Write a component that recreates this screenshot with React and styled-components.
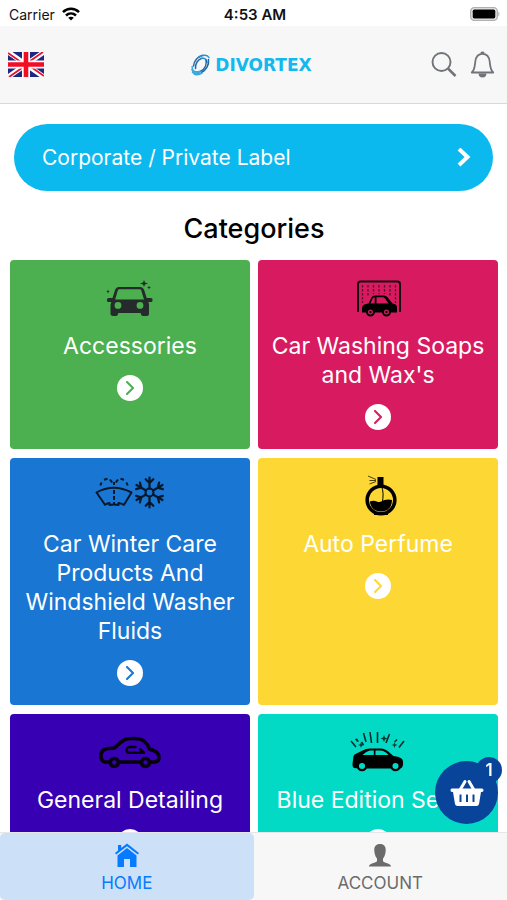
import React from 'react';
import styled, { createGlobalStyle } from 'styled-components';

const GlobalStyle = createGlobalStyle`
  * {
    box-sizing: border-box;
  }

  body {
    margin: 0;
    background: white;
    font-family: Inter, 'Liberation Sans', sans-serif;
  }

  button {
    font-family: inherit;
    border: 0;
    padding: 0;
    background: none;
    cursor: pointer;
  }

  a {
    color: inherit;
    text-decoration: none;
  }

  svg {
    display: block;
  }
`;

const Screen = styled.div`
  display: flex;
  flex-direction: column;
  height: 100vh;
`;

const StatusBar = styled.div`
  display: grid;
  grid-template-columns: 1fr auto 1fr;
  align-items: center;
  flex: none;
  height: 26px;
  padding: 2px 6px 0 9px;
  font-size: 14px;
  color: #111;
`;

const Carrier = styled.span`
  display: flex;
  align-items: center;
  gap: 7px;
`;

const Clock = styled.time`
  font-size: 15px;
  font-weight: 600;
`;

const Battery = styled.span`
  justify-self: end;
`;

const Header = styled.header`
  display: grid;
  grid-template-columns: 1fr auto 1fr;
  align-items: center;
  flex: none;
  height: 78px;
  padding: 0 12px 0 8px;
  background: #f7f7f8;
  border-bottom: 1px solid #d9d9db;
`;

const FlagButton = styled.button`
  justify-self: start;
`;

const Brand = styled.a`
  display: flex;
  align-items: center;
  gap: 5px;
  color: #12b9ee;
  font-family: 'DejaVu Sans', sans-serif;
  font-weight: 700;
  font-size: 17px;
  line-height: 20px;
`;

const Actions = styled.div`
  display: flex;
  align-items: center;
  justify-content: flex-end;
  gap: 13px;
`;

const Content = styled.main`
  flex: 1;
  min-height: 0;
  overflow-y: auto;
  scrollbar-width: none;
  padding: 20px 9px 0 10px;
`;

const LabelLink = styled.a`
  display: flex;
  align-items: center;
  justify-content: space-between;
  height: 67px;
  margin: 0 5px 0 4px;
  padding: 0 22px 0 28px;
  border-radius: 34px;
  background: #0cb9ef;
  color: white;
  font-size: 21px;
`;

const Title = styled.h1`
  margin: 20px 0 13px;
  font-size: 27px;
  font-weight: 500;
  line-height: 36px;
  text-align: center;
  color: black;
`;

const Grid = styled.div`
  display: grid;
  grid-template-columns: 1fr 1fr;
  gap: 9px 8px;
`;

const Card = styled.a`
  display: flex;
  flex-direction: column;
  align-items: center;
  gap: 14px;
  padding: 18px 8px 19px;
  border-radius: 4px;
  background: ${({ $color }) => $color};
  color: ${({ $color }) => $color};
`;

const CardTitle = styled.span`
  color: white;
  font-size: 23px;
  line-height: 29px;
  text-align: center;
`;

const Round = styled.span`
  display: grid;
  place-items: center;
  width: 26px;
  height: 26px;
  border-radius: 50%;
  background: white;
`;

const Tabs = styled.nav`
  display: flex;
  flex: none;
  height: 68px;
  background: #f7f7f8;
  border-top: 1px solid #e4e6ea;
`;

const Tab = styled.a`
  display: flex;
  flex: 1;
  flex-direction: column;
  align-items: center;
  gap: 4px;
  padding-top: 10px;
  border-radius: 5px;
  background: ${({ $active }) => ($active ? '#cce0f7' : 'transparent')};
  color: ${({ $active }) => ($active ? '#067bff' : '#6b6b6b')};
  font-size: 17px;
  line-height: 22px;
`;

const BasketButton = styled.button`
  position: fixed;
  right: 9px;
  bottom: 76px;
  display: grid;
  place-items: center;
  width: 63px;
  height: 63px;
  border-radius: 50%;
  background: #08459a;
  color: white;
`;

const Badge = styled.span`
  position: absolute;
  top: -4px;
  right: -4px;
  width: 26px;
  height: 26px;
  border-radius: 50%;
  background: #08459a;
  font-size: 17px;
  font-weight: 600;
  line-height: 26px;
`;

const WifiIcon = () => (
  <svg width='18' height='14' viewBox='0 0 18 14' fill='none' stroke='#000' strokeWidth='2.5'>
    <path d='M1 5.2C5.5.7 12.5.7 17 5.2M4 8.5c2.9-2.8 7.1-2.8 10 0' />
    <path d='M9 13.6 6.2 10.8c1.5-1.4 4.1-1.4 5.6 0z' fill='#000' stroke='none' />
  </svg>
);

const BatteryIcon = () => (
  <svg width='31' height='14' viewBox='0 0 31 14'>
    <rect x='.7' y='.7' width='26.6' height='12.6' rx='3.6' fill='#e8e8e8' stroke='#b0b0b0' strokeWidth='1.3' />
    <rect x='2.7' y='2.6' width='22.6' height='8.8' rx='1.6' />
    <path d='M28.4 4.5q2.2 2.5 0 5z' fill='#aaa' />
  </svg>
);

const FlagIcon = () => (
  <svg width='36' height='25' viewBox='0 0 36 25'>
    <path fill='#1b2a80' d='M0 0h36v25H0z' />
    <path stroke='#fff' strokeWidth='5' d='m0 0 36 25M36 0 0 25' />
    <path stroke='#e8112d' strokeWidth='1.8' d='m0 1 15 10.4M36 24 21 13.6M35 0 20 10.4M1 25l15-10.4' />
    <path stroke='#fff' strokeWidth='8' d='M18 0v25M0 12.5h36' />
    <path stroke='#f20d25' strokeWidth='4.6' d='M18 0v25M0 12.5h36' />
  </svg>
);

const BrandIcon = () => (
  <svg width='19' height='22' viewBox='0 0 19 22' fill='none' strokeLinecap='round'>
    <path stroke='#2a6cab' strokeWidth='1.5' d='M2.5 12C3 7 6.5 2.5 11.6 1.3M4.500 14.5C4 9.500 7 5.500 11 4.300' />
    <path stroke='#2494cf' strokeWidth='1.5' d='M8 3.300c4-3 8.500-2.500 10 .200M11 4.300c3.300-.500 4.500 1 5 4' />
    <path stroke='#1c67a8' strokeWidth='1.5' d='M17.500 5.500c.800 5-2.500 11-7.300 13.300M15 6c1 4.500-1.300 9-5.400 11.200' />
    <path stroke='#3aa9dd' strokeWidth='1.5' d='M11.300 18.800C7 22 3.200 21 1.500 18.200M1.200 12.500c-.4 4.500 2.700 6.200 7.800 4.700M.900 15.500c1 3.400 4 4.500 7.800 3.300' />
  </svg>
);

const SearchIcon = () => (
  <svg width='26' height='26' viewBox='0 0 26 26' fill='none' stroke='#707379' strokeWidth='1.9'>
    <circle cx='10.500' cy='10' r='9' />
    <path d='m17 16.500 7.500 7.500' strokeWidth='2.500' />
  </svg>
);

const BellIcon = () => (
  <svg width='25' height='28' viewBox='0 1 25 28' fill='none' stroke='#707379' strokeWidth='1.8'>
    <path d='M1.800 22.500C4.800 19.500 4.600 17 5.300 11.500 5.900 6.500 8 3.800 12.500 3.800s6.600 2.700 7.200 7.700c.7 5.500.5 8 3.500 11z' strokeLinejoin='round' />
    <path d='M8.600 23.500h7.800a3.900 3.900 0 0 1-7.800 0zM12.500 1.500a1.900 1.900 0 0 1 1.900 2.300h-3.800A1.900 1.900 0 0 1 12.500 1.500z' fill='#707379' stroke='none' />
  </svg>
);

const ArrowIcon = () => (
  <svg width='14' height='20' viewBox='0 1 14 20' fill='none' stroke='#fff' strokeWidth='4'>
    <path d='m2 2 8.500 8L2 18' />
  </svg>
);

const SmallArrowIcon = () => (
  <svg width='10' height='14' viewBox='0 0 10 14' fill='none' stroke='currentColor' strokeWidth='2'>
    <path d='m2 1 6 6-6 6' strokeLinecap='round' strokeLinejoin='round' />
  </svg>
);

const AccessoriesIcon = () => (
  <svg width='48' height='40' viewBox='0 -1 48 40' fill='#252b2a'>
    <path
      fillRule='evenodd'
      d='M12.500 8h22q2.500 0 3.500 2.500L40.700 19H45q1.500 0 1.500 1.500v1q0 1.500-1.500 1.500h-2.500l.5 3v9q0 2-2 2h-4q-2 0-2.300-3H12.300q-.3 3-2.300 3H7q-2.500 0-2.500-2V26l.8-3H2.500Q1 23 1 21.500v-1Q1 19 2.500 19h4L9.200 10.500Q10.200 8 12.500 8zm1 2.200q-1.300 0-1.700 1.300L9.200 20.500h28.800L35.300 11.500q-.4-1.300-1.700-1.300zM12 23a3.400 3.400 0 1 0 0 6.800 3.400 3.400 0 0 0 0-6.800zm22 0a3.400 3.400 0 1 0 0 6.800 3.400 3.400 0 0 0 0-6.800z'
    />
    <path d='m38 1 1 2.600 3 .9-3 .9-1 2.600-1-2.600-3-.9 3-.9zM43 6.500l.6 1.500 1.400.5-1.400.5-.6 1.500-.6-1.500-1.400-.5 1.400-.5zM2 10.500l.6 1.500 1 .5-1 .5L2 14.500l-.6-1.500-1-.5 1-.5z' />
  </svg>
);

const WashIcon = () => (
  <svg width='46' height='40' viewBox='-1 0 46 40'>
    <path d='M2 34V6q0-2.500 2.500-2.500h37Q44 3.500 44 6v28' fill='none' stroke='#170810' strokeWidth='2' />
    <path d='M6.500 7v18M12 7v11M17.500 7v9M23 7v9M28.500 7v9M34 7v11M39.500 7v18' stroke='#50122f' strokeWidth='1.300' strokeDasharray='2.500 1.500' />
    <path
      fillRule='evenodd'
      d='M6 34.500v-4q0-4 4-4.500l2.500-.5 3-6q1-2 3.500-2h9q2 0 3.500 1.800l5 6.200q4.500.5 4.500 4v5zM14.500 25.500h4.200v-6.300q-1.500 0-2.200 1.500zM20.500 25.500h12l-3.500-5q-1-1.300-2.500-1.300h-6z'
    />
    <path d='M11 34a3.500 3.500 0 1 0 7 0 3.500 3.500 0 0 0-7 0m16 0a3.500 3.500 0 1 0 7 0 3.500 3.500 0 0 0-7 0' fill='#d71d5e' stroke='#000' strokeWidth='2' />
    <circle cx='14.500' cy='34' r='1.200' />
    <circle cx='30.500' cy='34' r='1.200' />
  </svg>
);

const WinterIcon = () => (
  <svg width='70' height='40' viewBox='0 0 70 40' fill='none' stroke='#06182b' strokeWidth='2' strokeLinejoin='round'>
    <path d='M1.500 16.500q17-9.500 35 0l-7.500 12.300q-2.700-1.500-5.500-1.800v2q-4.500-1-9 0v-2q-2.800.5-4.500 1.800z' />
    <path d='M19 6v3M19 14v4M19 20v4M19 26v2.500' />
    <path d='M5.300 9.500 6.500 6.500M9 3.800l3.500-1M15 3.500l2.200 3M32.700 9.500 31.500 6.500M29 3.800l-3.500-1M23 3.500l-2.200 3' />
    <circle cx='54.500' cy='16.500' r='4' />
    {[0, 60, 120, 180, 240, 300].map((angle) => (
      <path key={angle} strokeWidth='2.200' strokeLinecap='round' transform={`rotate(${angle} 54.5 16.500)`} d='M54.500 12.500V1.500M50.700 3.200l3.800 3.800 3.800-3.800' />
    ))}
  </svg>
);

const PerfumeIcon = () => (
  <svg width='40' height='42' viewBox='-6 0 40 42'>
    <path d='M13.500 2h6v9h-6z' />
    <path d='M12 4.500 4 1M12 5.500l-6.500 0M12 6.500 5.500 9' stroke='#4b410f' strokeWidth='1' />
    <circle cx='17' cy='25' r='13.800' fill='none' stroke='#000' strokeWidth='3.600' />
    <path d='M5.800 26.500q4-1.500 7 0t7-1.200q4-1.300 8.200-.3 0 11-11 11.500-10-.5-11.200-10z' />
    <path d='M17.500 11q2.800 7 .7 17' fill='none' stroke='#000' />
    <path d='M10 37.500h14v2.500H10z' />
  </svg>
);

const DetailingIcon = () => (
  <svg width='62' height='40' viewBox='0 0 62 40' fill='none' stroke='#05000c' strokeWidth='3.600' strokeLinejoin='round' strokeLinecap='round'>
    <path d='M10.500 30H6Q2 29 2 24t3.500-6.500q2-1 10-1.500 5-5 9.500-8 2.500-1.500 9-1.500 8 0 11 2.500 4 3.500 5.500 8 6 2 8 4 1.500 2 1.500 5t-4 4h-4.500M20 30h21.500' />
    <circle cx='15.300' cy='30.500' r='4' />
    <circle cx='46.500' cy='30.500' r='4' />
    <path d='M36.500 15h-6q-3 .5-3 3t3 2.800h14.500l-4-3.500' strokeWidth='2.500' />
  </svg>
);

const BlueEditionIcon = () => (
  <svg width='56' height='42' viewBox='0 0 56 42'>
    <path d='m1 10 5 6M5.500 8l3 2.500M13.500 2l2.500 9M20 1l1.500 11M27.500 1v11M39.500 3l-3.500 9M54 10l-5 6.500M11.500 11l2 3M47 8.500 44.500 11' stroke='#052d29' strokeWidth='1.600' />
    <path d='m34 4 1 2.500 2.500 1-2.500 1-1 2.500-1-2.500-2.500-1 2.500-1zM44.500 11l.8 2.200 2.200.8-2.200.8-.8 2.200-.8-2.200-2.200-.8 2.200-.8zM11 11l.8 2.200L14 14l-2.200.8L11 17l-.8-2.200L8 14l2.200-.8zM7 7l1 2-1 2-1-2z' fill='#063b35' />
    <path
      fillRule='evenodd'
      d='M4 37q-1.500-.5-1.500-4l1-8 1-1.500 8-4q3-2 8-2h10q5 0 10 5l3 2.500q6 .7 8.500 3 1.500 2 1 5.500t-2.500 4H9zM12.500 24h11.300v-4.500h-4q-3.500.5-7.300 4.500zM25.500 24h13q-3.500-4.500-8.500-4.500h-4.500z'
    />
    <circle cx='12' cy='35' r='4.200' fill='#03dac6' stroke='#000' strokeWidth='2.300' />
    <circle cx='45.500' cy='35' r='4.200' fill='#03dac6' stroke='#000' strokeWidth='2.300' />
  </svg>
);

const HomeIcon = () => (
  <svg width='24' height='25' viewBox='0 0 24 25' fill='currentColor'>
    <path d='M12 .500 24 10l-1.200 1.600L12 3.200 1.200 11.600 0 10l3-2.400V2h3.200v3z' />
    <path d='M12 5 2.500 12.500V24H9v-8h6v8h6.500V12.500z' />
  </svg>
);

const AccountIcon = () => (
  <svg width='24' height='25' viewBox='0 0 24 25' fill='currentColor'>
    <path d='M12 1c4 0 6 2.500 5.700 6.500-.2 3.500-1 6-2.700 8V18c.5 2 8 2 8 5.500H1C1 20 8.500 20 9 18v-2.500c-1.700-2-2.500-4.500-2.700-8C6 3.500 8 1 12 1z' />
  </svg>
);

const BasketIcon = () => (
  <svg width='34' height='28' viewBox='0 0 34 28'>
    <path d='m10 11 5-8.500M24 11l-5-8.500' stroke='currentColor' strokeWidth='3' strokeLinecap='round' />
    <path
      fill='currentColor'
      fillRule='evenodd'
      d='M2 9.500h30q1.500 0 1.500 1.700T32 13h-1l-2 12q-.4 2-2.500 2h-19Q5.400 27 5 25L3 13H2Q.500 13 .500 11.200T2 9.500zM9.500 15.500v7.500h2v-7.500zm6.500 0v7.500h2v-7.500zm6.500 0v7.500h2v-7.500z'
    />
  </svg>
);

const categories = [
  { name: 'Accessories', color: '#4caf50', Icon: AccessoriesIcon },
  { name: "Car Washing Soaps and Wax's", color: '#d81b60', Icon: WashIcon },
  { name: 'Car Winter Care Products And Windshield Washer Fluids', color: '#1976d2', Icon: WinterIcon },
  { name: 'Auto Perfume', color: '#fdd835', Icon: PerfumeIcon },
  { name: 'General Detailing', color: '#3700b3', Icon: DetailingIcon },
  { name: 'Blue Edition Series', color: '#03dac6', Icon: BlueEditionIcon },
];

const IconBox = styled.span`
  display: flex;
  align-items: center;
  height: 40px;
`;

function CategoryCard({ name, color, Icon }) {
  return (
    <Card href='#' $color={color}>
      <IconBox>
        <Icon />
      </IconBox>
      <CardTitle>{name}</CardTitle>
      <Round>
        <SmallArrowIcon />
      </Round>
    </Card>
  );
}

export default function App() {
  return (
    <Screen>
      <GlobalStyle />
      <StatusBar>
        <Carrier>
          Carrier
          <WifiIcon />
        </Carrier>
        <Clock>4:53 AM</Clock>
        <Battery>
          <BatteryIcon />
        </Battery>
      </StatusBar>
      <Header>
        <FlagButton aria-label='Language'>
          <FlagIcon />
        </FlagButton>
        <Brand href='#'>
          <BrandIcon />
          DIVORTEX
        </Brand>
        <Actions>
          <button aria-label='Search'>
            <SearchIcon />
          </button>
          <button aria-label='Notifications'>
            <BellIcon />
          </button>
        </Actions>
      </Header>
      <Content>
        <LabelLink href='#'>
          Corporate / Private Label
          <ArrowIcon />
        </LabelLink>
        <Title>Categories</Title>
        <Grid>
          {categories.map((category) => (
            <CategoryCard key={category.name} {...category} />
          ))}
        </Grid>
      </Content>
      <Tabs>
        <Tab href='#' $active>
          <HomeIcon />
          HOME
        </Tab>
        <Tab href='#'>
          <AccountIcon />
          ACCOUNT
        </Tab>
      </Tabs>
      <BasketButton aria-label='Basket'>
        <BasketIcon />
        <Badge>1</Badge>
      </BasketButton>
    </Screen>
  );
}
